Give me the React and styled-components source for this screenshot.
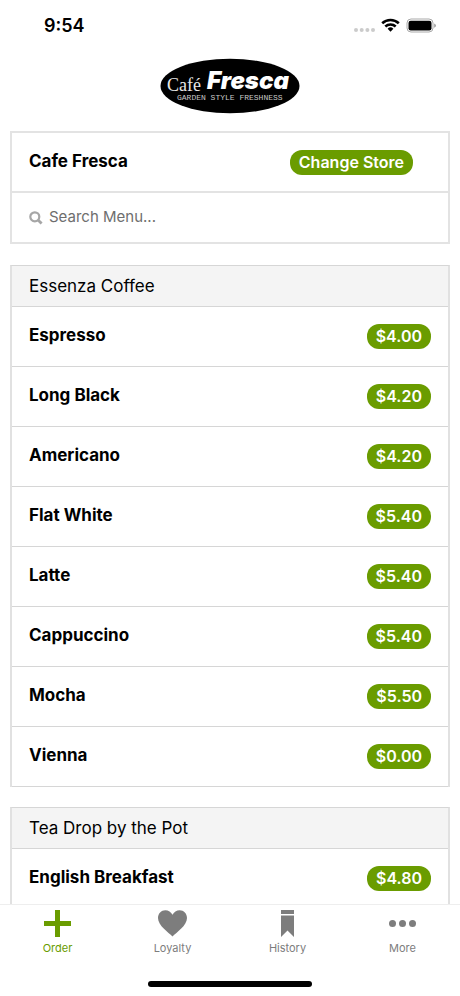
import React from 'react'
import styled, { createGlobalStyle } from 'styled-components'

const sections = [
  {
    title: 'Essenza Coffee',
    items: [
      { name: 'Espresso', price: '$4.00' },
      { name: 'Long Black', price: '$4.20' },
      { name: 'Americano', price: '$4.20' },
      { name: 'Flat White', price: '$5.40' },
      { name: 'Latte', price: '$5.40' },
      { name: 'Cappuccino', price: '$5.40' },
      { name: 'Mocha', price: '$5.50' },
      { name: 'Vienna', price: '$0.00' },
    ],
  },
  {
    title: 'Tea Drop by the Pot',
    items: [{ name: 'English Breakfast', price: '$4.80' }],
  },
]

const StatusIcons = () => (
  <svg width="84" height="20" viewBox="0 0 84 20" aria-hidden="true">
    <g fill="#cbcbcb">
      <circle cx="4" cy="14" r="2" />
      <circle cx="9.7" cy="14" r="2" />
      <circle cx="15.4" cy="14" r="2" />
      <circle cx="21" cy="14" r="2" />
    </g>
    <g fill="none" stroke="#000" strokeWidth="2.6">
      <path d="M30.2 7.2a12.2 12.2 0 0 1 16.6 0" />
      <path d="M33.3 10.5a7.7 7.7 0 0 1 10.4 0" />
    </g>
    <path d="M35.6 12.7a4.2 4.2 0 0 1 5.8 0L38.5 15.8z" />
    <rect x="55" y="3" width="26" height="13" rx="4" fill="#fff" stroke="#a9a9a9" />
    <rect x="56.5" y="4.7" width="23" height="9.8" rx="2.2" />
    <path d="M82.3 7.4c2 .8 2 3.6 0 4.4z" fill="#8e8e8e" />
  </svg>
)

const Logo = () => (
  <svg width="140" height="56" viewBox="0 0 140 56" role="img" aria-label="Café Fresca">
    <ellipse cx="70" cy="28" rx="69.5" ry="27.3" fill="#000" />
    <text x="7" y="33" fill="#e8e8e8" fontFamily="'Liberation Serif', serif" fontSize="18">
      Café
    </text>
    <text
      x="47"
      y="31"
      fill="#fff"
      fontFamily="Inter, sans-serif"
      fontWeight="900"
      fontStyle="italic"
      fontSize="24"
    >
      Fresca
    </text>
    <text x="17" y="42" fill="#c8c8c8" fontFamily="'Liberation Mono', monospace" fontSize="8">
      GARDEN STYLE FRESHNESS
    </text>
  </svg>
)

const SearchIcon = () => (
  <svg width="14" height="14" viewBox="0 0 14 14" fill="none" stroke="#a6a6a6" aria-hidden="true">
    <circle cx="5.8" cy="5.8" r="4.5" strokeWidth="2.2" />
    <path d="M9 9l3.6 3.6" strokeWidth="2.8" />
  </svg>
)

const tabs = [
  { label: 'Order', active: true, icon: <path d="M13 1h5v11h11v5H18v11h-5V17H2v-5h11z" /> },
  {
    label: 'Loyalty',
    icon: (
      <path d="M15.5 27.5C11.5 23.2 1 16.8 1 9 1 4.5 4.3 1.2 8.3 1.2c3.1 0 5.8 1.7 7.2 4.6 1.4-2.9 4.1-4.6 7.2-4.6C26.7 1.2 30 4.5 30 9c0 7.8-10.5 14.2-14.5 18.5z" />
    ),
  },
  { label: 'History', icon: <path d="M9 1h13v4H9zM9 6.5h13V28l-6.5-6.5L9 28z" /> },
  {
    label: 'More',
    icon: (
      <>
        <circle cx="5.5" cy="14.5" r="3.5" />
        <circle cx="15.5" cy="14.5" r="3.5" />
        <circle cx="25.5" cy="14.5" r="3.5" />
      </>
    ),
  },
]

const App = () => {
  return (
    <>
      <GlobalStyle />
      <Screen>
        <StatusBar>
          <Time>9:54</Time>
          <StatusIcons />
        </StatusBar>
        <Content>
          <Brand>
            <Logo />
          </Brand>
          <StoreCard>
            <StoreRow>
              <StoreName>Cafe Fresca</StoreName>
              <ChangeButton type="button">Change Store</ChangeButton>
            </StoreRow>
            <SearchRow>
              <SearchIcon />
              <SearchInput type="text" placeholder="Search Menu..." aria-label="Search Menu" />
            </SearchRow>
          </StoreCard>
          {sections.map((section) => (
            <MenuCard key={section.title}>
              <MenuTitle>{section.title}</MenuTitle>
              <MenuList>
                {section.items.map((item) => (
                  <li key={item.name}>
                    <MenuItem type="button">
                      <ItemName>{item.name}</ItemName>
                      <Price>{item.price}</Price>
                    </MenuItem>
                  </li>
                ))}
              </MenuList>
            </MenuCard>
          ))}
        </Content>
        <TabBar>
          {tabs.map((tab) => (
            <Tab key={tab.label} type="button" $active={tab.active}>
              <svg width="31" height="29" viewBox="0 0 31 29" fill="currentColor" aria-hidden="true">
                {tab.icon}
              </svg>
              {tab.label}
            </Tab>
          ))}
        </TabBar>
        <HomeArea>
          <HomeIndicator />
        </HomeArea>
      </Screen>
    </>
  )
}

const GlobalStyle = createGlobalStyle`
  * {
    box-sizing: border-box;
  }
  body {
    margin: 0;
    background: #fff;
    color: #000;
    font-family: Inter, 'Liberation Sans', sans-serif;
  }
  button,
  input {
    font-family: inherit;
  }
`

const Screen = styled.div`
  height: 100vh;
  display: flex;
  flex-direction: column;
`

const StatusBar = styled.header`
  flex: none;
  display: flex;
  align-items: center;
  justify-content: space-between;
  height: 52px;
  padding: 0 24px 0 44px;
`

const Time = styled.span`
  font-size: 18px;
  font-weight: 600;
  line-height: 24px;
`

const Content = styled.main`
  flex: 1;
  min-height: 0;
  overflow-y: auto;
  padding: 0 10px;
  scrollbar-width: none;
`

const Brand = styled.div`
  display: flex;
  justify-content: center;
  padding: 6px 0 17px;
  svg {
    display: block;
  }
`

const StoreCard = styled.section`
  margin-bottom: 21px;
  border: 2px solid #e3e3e3;
`

const StoreRow = styled.div`
  display: flex;
  align-items: center;
  justify-content: space-between;
  height: 60px;
  padding: 0 35px 0 17px;
  border-bottom: 2px solid #e3e3e3;
`

const StoreName = styled.h1`
  margin: 0;
  padding-bottom: 2px;
  font-size: 17px;
  font-weight: 700;
  line-height: 24px;
`

const ChangeButton = styled.button`
  height: 25px;
  padding: 0 9px;
  border: none;
  border-radius: 12px;
  background: #6a9c00;
  color: #fff;
  font-size: 16px;
  font-weight: 600;
  line-height: 25px;
`

const SearchRow = styled.div`
  display: flex;
  align-items: center;
  gap: 6px;
  height: 49px;
  padding: 0 17px;
`

const SearchInput = styled.input`
  flex: 1;
  min-width: 0;
  padding: 0 0 2px;
  border: none;
  outline: none;
  background: transparent;
  font-size: 15px;
  line-height: 24px;
  &::placeholder {
    color: #6e6e6e;
    opacity: 1;
  }
`

const MenuCard = styled.section`
  margin-bottom: 20px;
  border: solid #d6d6d6;
  border-width: 1px 2px 0;
  border-left-color: #e1e1e1;
  border-right-color: #e1e1e1;
`

const MenuTitle = styled.h2`
  margin: 0;
  padding: 8px 17px;
  border-bottom: 1px solid #d6d6d6;
  background: #f4f4f4;
  font-size: 17px;
  font-weight: 400;
  line-height: 24px;
`

const MenuList = styled.ul`
  margin: 0;
  padding: 0;
  list-style: none;
`

const MenuItem = styled.button`
  display: flex;
  align-items: center;
  justify-content: space-between;
  width: 100%;
  height: 60px;
  padding: 0 17px;
  border: none;
  border-bottom: 1px solid #d6d6d6;
  background: #fff;
  color: #000;
  text-align: left;
`

const ItemName = styled.span`
  padding-bottom: 4px;
  font-size: 17px;
  font-weight: 700;
  line-height: 24px;
`

const Price = styled.span`
  padding: 0 9px;
  border-radius: 12px;
  background: #6a9c00;
  color: #fff;
  font-size: 16px;
  font-weight: 600;
  line-height: 25px;
`

const TabBar = styled.nav`
  flex: none;
  display: grid;
  grid-template-columns: repeat(4, 1fr);
  border-top: 1px solid #eee;
  background: #fff;
`

const Tab = styled.button`
  display: flex;
  flex-direction: column;
  align-items: center;
  gap: 2px;
  padding: 4px 0;
  border: none;
  background: none;
  color: ${({ $active }) => ($active ? '#6a9c00' : '#7d7d7d')};
  font-size: 11px;
  line-height: 16px;
`

const HomeArea = styled.footer`
  flex: none;
  display: flex;
  justify-content: center;
  padding: 21px 0 9px;
`

const HomeIndicator = styled.div`
  width: 164px;
  height: 6px;
  border-radius: 3px;
  background: #000;
`

export default App
